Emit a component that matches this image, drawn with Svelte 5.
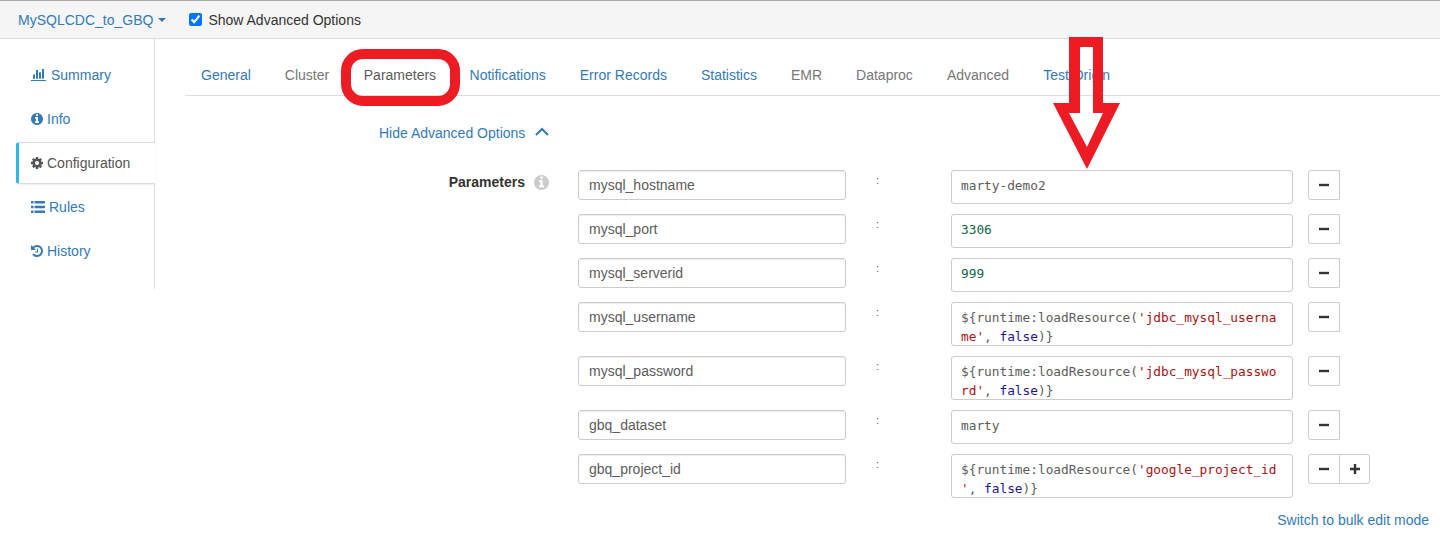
<script>
  const side = [
    { name: 'Summary', icon: 'bar' },
    { name: 'Info', icon: 'info' },
    { name: 'Configuration', icon: 'cog', active: true },
    { name: 'Rules', icon: 'list' },
    { name: 'History', icon: 'hist' }
  ];
  const tabs = [
    ['General', 'l'], ['Cluster', 'g'], ['Parameters', 'a'], ['Notifications', 'l'], ['Error Records', 'l'],
    ['Statistics', 'l'], ['EMR', 'g'], ['Dataproc', 'g'], ['Advanced', 'g'], ['Test Origin', 'l']
  ];
  const res = (s) => [['', '${runtime:loadResource('], ['str', s], ['', ', '], ['atom', 'false'], ['', ')}']];
  const rows = [
    { k: 'mysql_hostname', v: [['', 'marty-demo2']] },
    { k: 'mysql_port', v: [['num', '3306']] },
    { k: 'mysql_serverid', v: [['num', '999']] },
    { k: 'mysql_username', v: res("'jdbc_mysql_username'"), tall: true },
    { k: 'mysql_password', v: res("'jdbc_mysql_password'"), tall: true },
    { k: 'gbq_dataset', v: [['', 'marty']] },
    { k: 'gbq_project_id', v: res("'google_project_id'"), tall: true, plus: true }
  ];
  const infoPath = 'M1152 1376v-160q0-14-9-23t-23-9h-96v-512q0-14-9-23t-23-9h-320q-14 0-23 9t-9 23v160q0 14 9 23t23 9h96v320h-96q-14 0-23 9t-9 23v160q0 14 9 23t23 9h448q14 0 23-9t9-23zm-128-896v-160q0-14-9-23t-23-9h-192q-14 0-23 9t-9 23v160q0 14 9 23t23 9h192q14 0 23-9t9-23zm640 416q0 209-103 385.500t-279.500 279.500-385.500 103-385.500-103-279.500-279.500-103-385.500 103-385.500 279.500-279.500 385.500-103 385.500 103 279.500 279.500 103 385.500z';
</script>

<div class="page">
  <header class="top">
    <span class="brand">MySQLCDC_to_GBQ<i class="caret"></i></span>
    <label class="adv"><input type="checkbox" checked /> <span>Show Advanced Options</span></label>
  </header>

  <div class="body">
    <nav class="side">
      {#each side as s}
        <div class="item" class:active={s.active}>
          {#if s.icon === 'bar'}
            <svg class="ic bar" viewBox="0 256 2048 1408" preserveAspectRatio="none"><path d="M512 896v512h-256v-512h256zm384-512v1024h-256v-1024h256zm1024 1152v128h-2048v-1536h128v1408h1920zm-640-896v768h-256v-768h256zm384-384v1152h-256v-1152h256z"/></svg>
          {:else if s.icon === 'info'}
            <svg class="ic" viewBox="128 128 1536 1536"><path d={infoPath}/></svg>
          {:else if s.icon === 'cog'}
            <svg class="ic" viewBox="128 128 1536 1536"><path d="M1152 896q0-106-75-181t-181-75-181 75-75 181 75 181 181 75 181-75 75-181zm512-109v222q0 12-8 23t-20 13l-185 28q-19 54-39 91 35 50 107 138 10 12 10 25t-9 23q-27 37-99 108t-94 71q-12 0-26-9l-138-108q-44 23-91 38-16 136-29 186-7 28-36 28h-222q-14 0-24.500-8.500t-11.500-21.500l-28-184q-49-16-90-37l-141 107q-10 9-25 9-14 0-25-11-126-114-165-168-7-10-7-23 0-12 8-23 15-21 51-66.500t54-70.500q-27-50-41-99l-183-27q-13-2-21-12.500t-8-23.500v-222q0-12 8-23t19-13l186-28q14-46 39-92-40-57-107-138-10-12-10-24 0-10 9-23 26-36 98.500-107.500t94.500-71.500q13 0 26 10l138 107q44-23 91-38 16-136 29-186 7-28 36-28h222q14 0 24.500 8.500t11.500 21.500l28 184q49 16 90 37l142-107q9-9 24-9 13 0 25 10 129 119 165 170 7 8 7 22 0 12-8 23-15 21-51 66.500t-54 70.500q26 50 41 98l183 28q13 2 21 12.500t8 23.500z"/></svg>
          {:else if s.icon === 'list'}
            <svg class="ic lst" viewBox="0 0 14 12"><path d="M0 0h2.500v2.600H0zM3.500 0H14v2.600H3.500zM0 4.700h2.500v2.600H0zM3.500 4.700H14v2.600H3.500zM0 9.400h2.500V12H0zM3.500 9.400H14V12H3.500z"/></svg>
          {:else}
            <svg class="ic" viewBox="128 128 1536 1536"><path d="M1664 896q0 156-61 298t-164 245-245 164-298 61q-172 0-327-72.500t-264-204.500q-7-10-6.500-22.500t8.500-20.500l137-138q10-9 25-9 16 2 23 12 73 95 179 147t225 52q104 0 198.500-40.500t163.500-109.500 109.500-163.500 40.500-198.500-40.500-198.500-109.500-163.500-163.500-109.500-198.500-40.500q-98 0-188 35.500t-160 101.500l137 138q31 30 14 69-17 40-59 40h-448q-26 0-45-19t-19-45v-448q0-42 40-59 39-17 69 14l130 129q107-101 244.500-156.500t284.500-55.500q156 0 298 61t245 164 164 245 61 298zm-640-288v448q0 14-9 23t-23 9h-320q-14 0-23-9t-9-23v-64q0-14 9-23t23-9h224v-352q0-14 9-23t23-9h64q14 0 23 9t9 23z"/></svg>
          {/if}
          <span>{s.name}</span>
        </div>
      {/each}
    </nav>

    <main class="main">
      <div class="tabs">
        {#each tabs as t}
          <span class="tab {t[1]}">{t[0]}</span>
        {/each}
      </div>

      <div class="hide">
        <span>Hide Advanced Options</span>
        <svg class="chev" viewBox="0 0 14 9"><path d="M1 8 7 2l6 6" /></svg>
      </div>

      <div class="form">
        <div class="label">
          <b>Parameters</b>
          <svg class="lic" viewBox="128 128 1536 1536"><path d={infoPath}/></svg>
        </div>
        <div class="rows">
          {#each rows as r}
            <div class="row">
              <input class="key" value={r.k} />
              <span class="colon">:</span>
              <div class="val" class:tall={r.tall}>
                {#each r.v as p}<span class={p[0]}>{p[1]}</span>{/each}
              </div>
              <div class="btns">
                <button class="btn" aria-label="Remove"><svg viewBox="0 0 10 10"><path d="M0 3.800h10v2.400H0z"/></svg></button>
                {#if r.plus}
                  <button class="btn plus" aria-label="Add"><svg viewBox="0 0 10 10"><path d="M0 3.800h3.800V0h2.400v3.800H10v2.400H6.200V10H3.800V6.200H0z"/></svg></button>
                {/if}
              </div>
            </div>
          {/each}
        </div>
      </div>
      <div class="bulk">Switch to bulk edit mode</div>
    </main>
  </div>

  <div class="ring"></div>
  <svg class="arrow" viewBox="0 0 1440 533" aria-hidden="true">
    <path fill-rule="evenodd" d="M1069 37h34v66h17l-33 66-34-66h16zM1080 47v66h-11l18 34 16-34h-10V47z" />
  </svg>
</div>

<style>
  :global(body) { margin: 0; background: #fff; }
  .page {
    position: relative;
    height: 533px;
    overflow: hidden;
    font: 14px/20px "Liberation Sans", Arial, sans-serif;
    color: #333;
  }
  .top {
    box-sizing: border-box;
    height: 39px;
    background: #f5f5f5;
    border-top: 1px solid #a9a9a9;
    border-bottom: 1px solid #ddd;
    display: flex;
    align-items: center;
    padding-left: 18px;
  }
  .brand { color: #337ab7; display: flex; align-items: center; }
  .caret {
    margin-left: 5px;
    border-top: 4px solid #337ab7;
    border-left: 4px solid transparent;
    border-right: 4px solid transparent;
  }
  .adv { display: flex; align-items: center; margin-left: 23px; }
  .adv input { width: 13px; height: 13px; margin: 0 6px 0 0; }

  .body { display: flex; }
  .side {
    box-sizing: border-box;
    width: 139px;
    height: 250px;
    margin-left: 16px;
    padding-top: 14px;
    border-right: 1px solid #ddd;
    flex: none;
  }
  .item {
    height: 44px;
    display: flex;
    align-items: center;
    gap: 4px;
    padding-left: 15px;
    color: #337ab7;
    box-sizing: border-box;
  }
  .item.active {
    height: 42px;
    margin: 1px -1px 1px 0;
    padding-left: 12px;
    color: #555;
    background: #fff;
    border-left: 3px solid #2bbbe8;
    border-top: 1px solid #ddd;
    border-bottom: 1px solid #ddd;
    border-radius: 3px 0 0 3px;
    box-shadow: 0 1px 2px rgba(0, 0, 0, .08);
    position: relative;
  }
  .ic { width: 12px; height: 12px; fill: currentColor; flex: none; }
  .ic.bar { width: 16px; height: 12px; }
  .ic.lst { width: 14px; height: 12px; margin-top: -1px; }

  .main { flex: 1; min-width: 0; margin-left: 30px; }
  .tabs {
    box-sizing: border-box;
    height: 57px;
    padding-top: 14px;
    border-bottom: 1px solid #ddd;
    display: flex;
  }
  .tab { padding: 12px 17px 0; height: 42px; box-sizing: border-box; white-space: nowrap; }
  .tab:first-child { padding-left: 16px; }
  .tab.l { color: #337ab7; }
  .tab.g { color: #777; }
  .tab.a { color: #5c5c5c; padding-left: 17.6px; padding-right: 16.4px; }

  .hide {
    margin: 27px 0 0 194px;
    color: #337ab7;
    display: flex;
    align-items: center;
    gap: 10px;
  }
  .chev { width: 14px; height: 9px; margin-top: -4px; }
  .chev path { fill: none; stroke: #337ab7; stroke-width: 2; }

  .form { display: flex; margin-top: 27px; }
  .label {
    box-sizing: border-box;
    width: 393px;
    padding-right: 29px;
    margin-top: 2px;
    display: flex;
    justify-content: flex-end;
    align-items: center;
    gap: 9px;
    height: 20px;
    flex: none;
    color: #333;
  }
  .lic { width: 15px; height: 15px; fill: #ccc; }
  .row { display: flex; margin-bottom: 10px; align-items: flex-start; }
  .key {
    box-sizing: border-box;
    width: 268px;
    height: 30px;
    padding: 0 10px;
    border: 1px solid #ccc;
    border-radius: 3px;
    box-shadow: inset 0 1px 1px rgba(0, 0, 0, .075);
    font: inherit;
    color: #5c5c5c;
    background: #fff;
    outline: none;
  }
  .colon {
    width: 105px;
    padding-left: 30px;
    box-sizing: border-box;
    font-size: 11px;
    line-height: 20px;
    color: #555;
    flex: none;
  }
  .val {
    box-sizing: border-box;
    width: 342px;
    height: 34px;
    padding: 5px 11px 0 9px;
    border: 1px solid #ccc;
    border-radius: 3px;
    font: 12.79px/19px "DejaVu Sans Mono", "Liberation Mono", monospace;
    color: #5c5c5c;
    line-break: anywhere;
    white-space: pre-wrap;
    overflow: hidden;
    flex: none;
  }
  .val.tall { height: 44px; }
  .str { color: #a11; }
  .atom { color: #219; }
  .num { color: #164; }
  .btns { display: flex; margin-left: 15px; }
  .btn {
    box-sizing: border-box;
    width: 32px;
    height: 30px;
    padding: 0;
    border: 1px solid #ccc;
    border-radius: 3px 0 0 3px;
    background: #fff;
    display: flex;
    align-items: center;
    justify-content: center;
  }
  .btn svg { width: 10px; height: 10px; fill: #333; }
  .btn.plus { width: 31px; margin-left: -1px; border-radius: 0 3px 3px 0; }
  .bulk { text-align: right; color: #337ab7; margin: 2px 11px 0 0; }

  .ring {
    position: absolute;
    box-sizing: border-box;
    left: 341px;
    top: 49px;
    width: 119px;
    height: 57px;
    border: 10px solid #ed1c24;
    border-radius: 22px;
  }
  .arrow { position: absolute; left: 0; top: 0; width: 1440px; height: 533px; fill: #ed1c24; pointer-events: none; }
</style>
